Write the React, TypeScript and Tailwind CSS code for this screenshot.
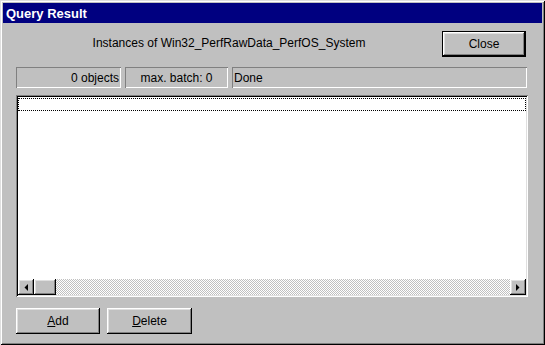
const raised =
  "shadow-[inset_-1px_-1px_#000,inset_1px_1px_#fff,inset_-2px_-2px_#808080,inset_2px_2px_#dfdfdf]";

function Button({
  children,
  width,
  isDefault,
}: {
  children: React.ReactNode;
  width: string;
  isDefault?: boolean;
}) {
  return (
    <button
      className={`${width} h-[26px] bg-[#c0c0c0] text-[12px] text-black flex items-center justify-center ${
        isDefault
          ? "border border-black shadow-[inset_-1px_-1px_#000,inset_1px_1px_#fff,inset_-2px_-2px_#808080,inset_2px_2px_#dfdfdf]"
          : raised
      }`}
    >
      {children}
    </button>
  );
}

function StatusPanel({
  children,
  width,
  align,
}: {
  children?: React.ReactNode;
  width: string;
  align: string;
}) {
  return (
    <div
      className={`${width} h-[21px] flex items-center px-[2px] ${align} shadow-[inset_1px_1px_#808080,inset_-1px_-1px_#fff] text-[12px] text-black`}
    >
      {children}
    </div>
  );
}

function ScrollArrow({ dir }: { dir: "left" | "right" }) {
  return (
    <div className={`w-[16px] h-[16px] bg-[#c0c0c0] flex items-center justify-center ${raised}`}>
      <svg width="4" height="7" viewBox="0 0 4 7">
        {dir === "left" ? (
          <path d="M4 0 L4 7 L0.5 3.5 Z" fill="#000" />
        ) : (
          <path d="M0 0 L0 7 L3.5 3.5 Z" fill="#000" />
        )}
      </svg>
    </div>
  );
}

export default function App() {
  return (
    <div
      className="w-[545px] h-[345px] bg-[#c0c0c0] p-[3px] flex flex-col shadow-[inset_1px_1px_#dfdfdf,inset_-1px_-1px_#000,inset_2px_2px_#fff,inset_-2px_-2px_#808080]"
      style={{ fontFamily: '"Liberation Sans", Arial, sans-serif' }}
    >
      <div className="h-[20px] bg-[#000080] flex items-center pl-[3px]">
        <span className="text-white font-bold text-[13px] leading-none">Query Result</span>
      </div>

      <div className="flex items-start pt-[8px] pl-[13px] pr-[16px]">
        <div className="flex-1 text-center text-[12px] text-black pt-[3px]">
          Instances of Win32_PerfRawData_PerfOS_System
        </div>
        <Button width="w-[84px]" isDefault>
          Close
        </Button>
      </div>

      <div className="flex gap-[4px] mt-[10px] pl-[13px] pr-[15px]">
        <StatusPanel width="w-[105px]" align="justify-end">
          0 objects
        </StatusPanel>
        <StatusPanel width="w-[103px]" align="justify-center">
          max. batch: 0
        </StatusPanel>
        <StatusPanel width="flex-1" align="justify-start">
          Done
        </StatusPanel>
      </div>

      <div className="ml-[13px] mr-[14px] mt-[7px] h-[202px] bg-white p-[2px] flex flex-col shadow-[inset_1px_1px_#808080,inset_-1px_-1px_#fff,inset_2px_2px_#000,inset_-2px_-2px_#dfdfdf]">
        <div className="flex-1">
          <div className="mt-[1px] h-[13px] border border-dotted border-black" />
        </div>
        <div className="h-[16px] flex">
          <ScrollArrow dir="left" />
          <div className={`w-[22px] h-[16px] bg-[#c0c0c0] ${raised}`} />
          <div className="flex-1 bg-[repeating-conic-gradient(#c0c0c0_0_25%,#fff_0_50%)] bg-[length:2px_2px]" />
          <ScrollArrow dir="right" />
        </div>
      </div>

      <div className="flex gap-[7px] mt-[11px] pl-[13px]">
        <Button width="w-[84px]">
          <span>
            <span className="underline">A</span>dd
          </span>
        </Button>
        <Button width="w-[85px]">
          <span>
            <span className="underline">D</span>elete
          </span>
        </Button>
      </div>
    </div>
  );
}
